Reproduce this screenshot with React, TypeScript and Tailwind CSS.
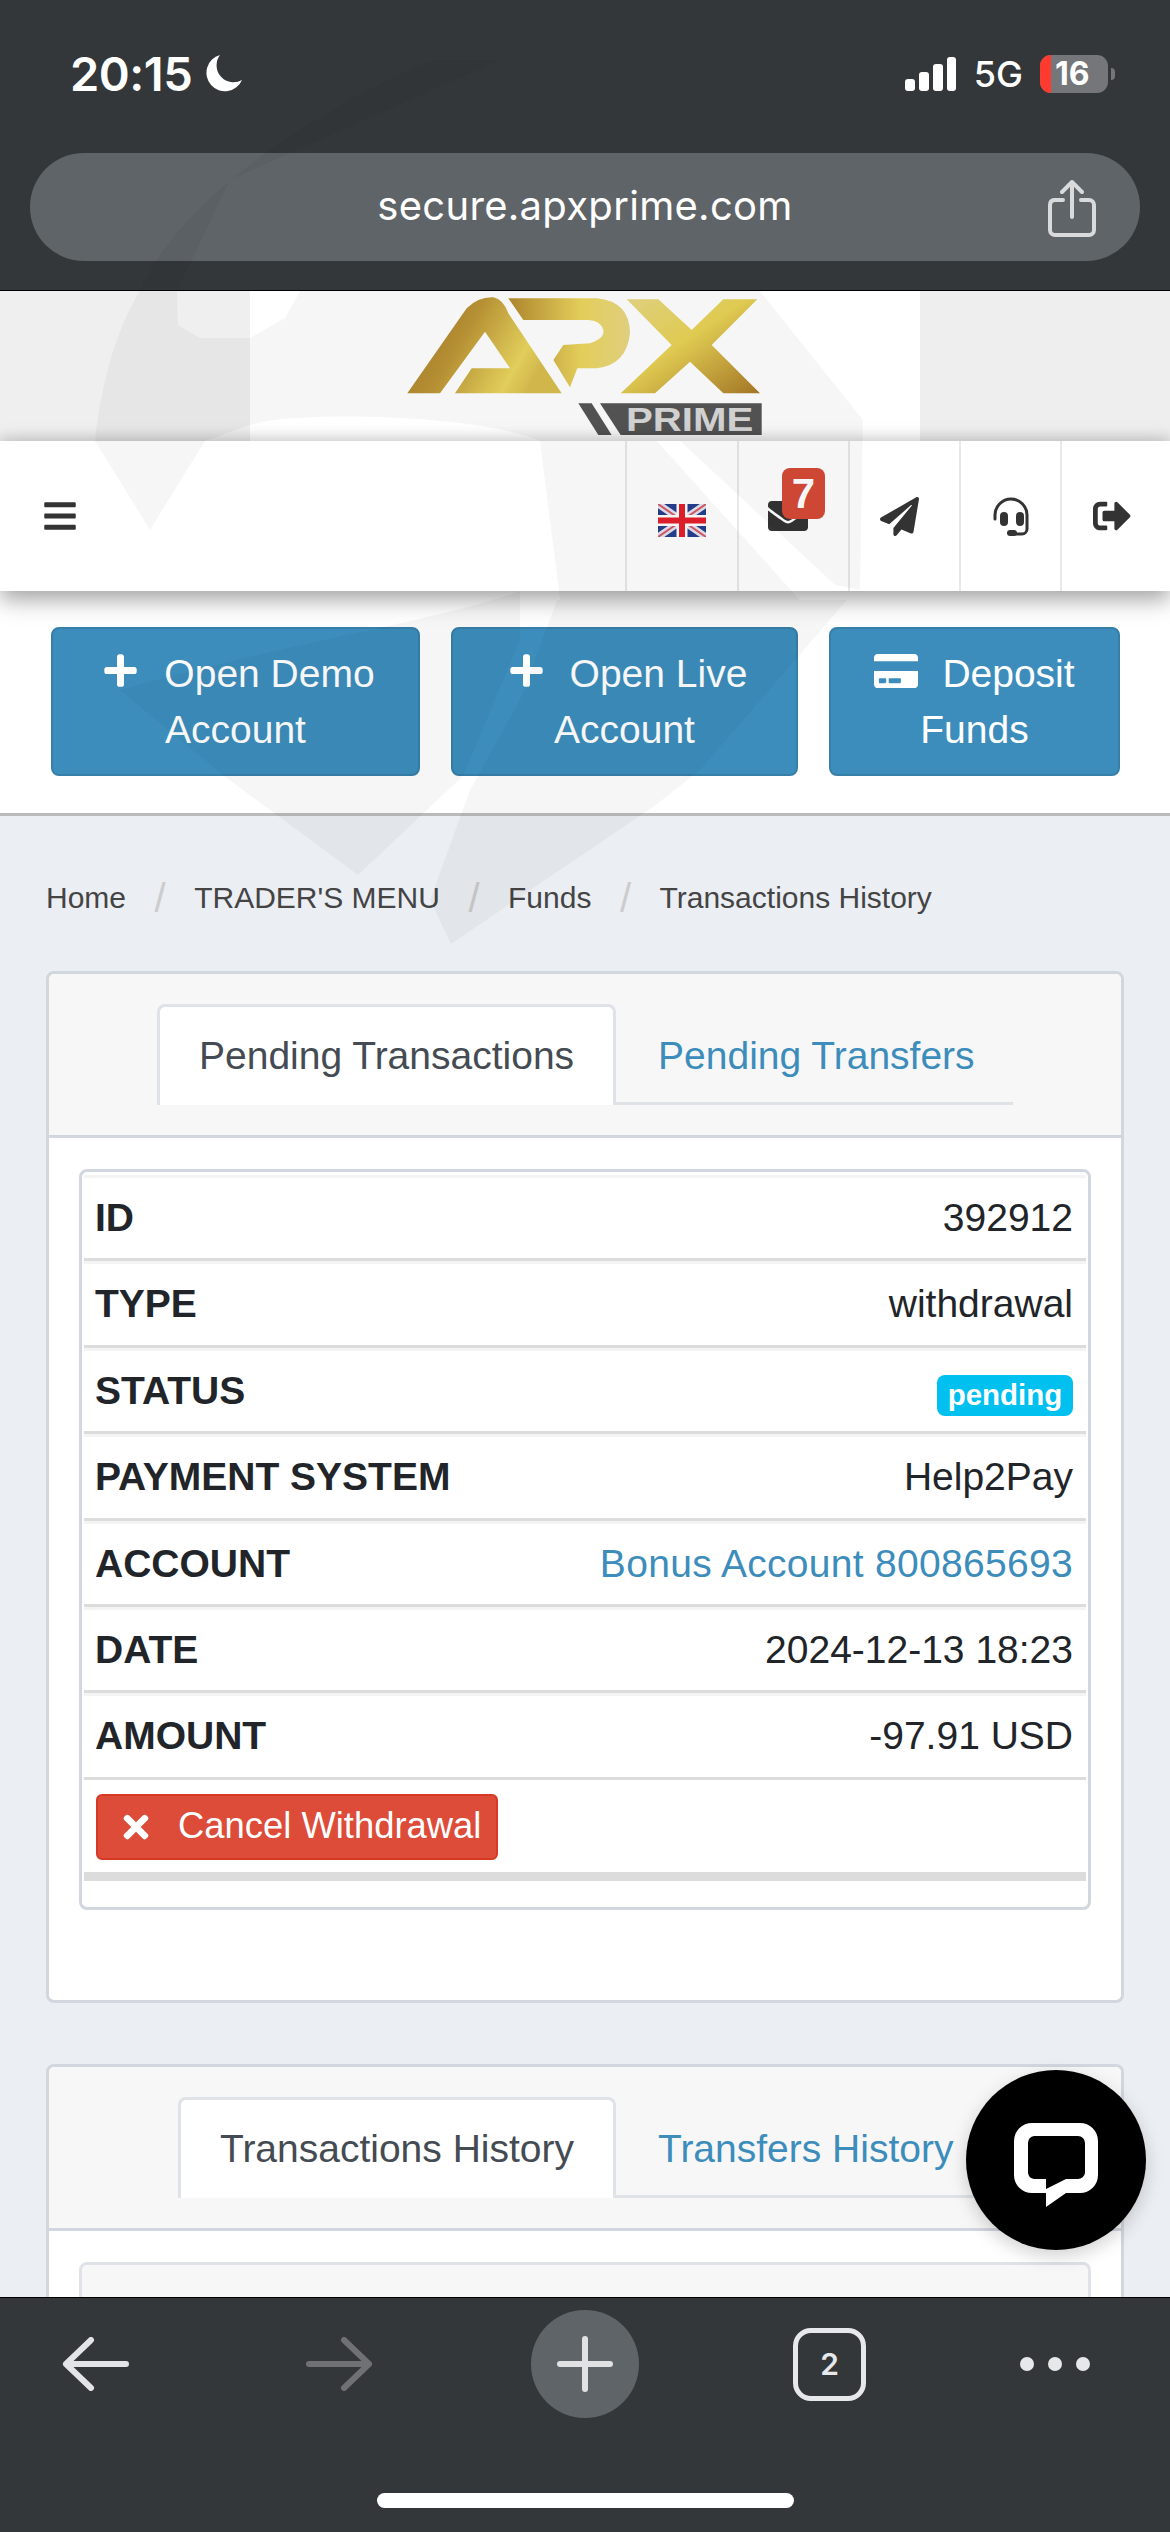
import { FaBars, FaCreditCard, FaEnvelope, FaPaperPlane, FaPlus, FaSignOutAlt, FaTimes } from "react-icons/fa";

const rows = [
  { label: "ID", value: "392912" },
  { label: "TYPE", value: "withdrawal" },
  { label: "STATUS", value: "pending", badge: true },
  { label: "PAYMENT SYSTEM", value: "Help2Pay" },
  { label: "ACCOUNT", value: "Bonus Account 800865693", link: true },
  { label: "DATE", value: "2024-12-13 18:23" },
  { label: "AMOUNT", value: "-97.91 USD" },
];

function StatusBar() {
  return (
    <div className="h-[153px] flex items-center justify-between pb-[6px] pl-[70px] pr-[55px] text-white font-['Inter',sans-serif]">
      <div className="flex items-center gap-[14px]">
        <span className="text-[47px] font-semibold leading-none tracking-[-0.5px]">20:15</span>
        <svg width="36" height="37" viewBox="0 0 36 37" fill="#fff">
          <path d="M14 0 A18.5 18.5 0 1 0 36 25 A17 17 0 0 1 14 0 Z" />
        </svg>
      </div>
      <div className="flex items-center">
        <div className="flex items-end gap-[4px] h-[34px]">
          <span className="w-[10px] h-[12px] rounded-[3px] bg-white" />
          <span className="w-[10px] h-[19px] rounded-[3px] bg-white" />
          <span className="w-[10px] h-[27px] rounded-[3px] bg-white" />
          <span className="w-[9px] h-[34px] rounded-[3px] bg-white" />
        </div>
        <span className="ml-[18px] text-[36px] font-medium leading-none">5G</span>
        <div className="ml-[17px] w-[68px] h-[38px] rounded-[11px] bg-[#747679] overflow-hidden flex">
          <span className="w-[11px] bg-[#ff3b30]" />
          <span className="ml-[4px] text-[32px] font-bold leading-[38px]">16</span>
        </div>
        <span className="ml-[3px] w-[4px] h-[12px] rounded-r-full bg-[#747679]" />
      </div>
    </div>
  );
}

function AddressBar() {
  return (
    <div className="relative mx-[30px] h-[108px] rounded-[54px] bg-[#5f6468] flex items-center justify-center font-['Inter',sans-serif]">
      <span className="text-[40px] text-white tracking-[0.3px] -mt-[2px]">secure.apxprime.com</span>
      <svg className="absolute right-[43px] top-[27px]" width="50" height="58" viewBox="0 0 50 58" fill="none" stroke="#d8dadc" strokeWidth="4" strokeLinecap="round" strokeLinejoin="round">
        <path d="M16 20 H7 A5 5 0 0 0 3 25 V50 A5 5 0 0 0 8 55 H42 A5 5 0 0 0 47 50 V25 A5 5 0 0 0 42 20 H34" />
        <path d="M25 37 V3 M15 12 L25 2 L35 12" />
      </svg>
    </div>
  );
}

function Logo() {
  return (
    <svg className="ml-[100px]" width="450" height="150" viewBox="0 33 1350 450">
      <defs>
        <linearGradient id="goldA" x1="0" y1="0" x2="1" y2="0.35">
          <stop offset="0.1" stopColor="#a97a27" />
          <stop offset="0.45" stopColor="#bd9636" />
          <stop offset="0.85" stopColor="#ead65f" />
          <stop offset="1" stopColor="#d9bd4e" />
        </linearGradient>
        <linearGradient id="goldP" x1="0" y1="0" x2="1" y2="0">
          <stop offset="0" stopColor="#b48a2f" />
          <stop offset="0.6" stopColor="#ecd65e" />
          <stop offset="1" stopColor="#e8d683" />
        </linearGradient>
        <linearGradient id="goldX" x1="0" y1="0" x2="1" y2="1">
          <stop offset="0" stopColor="#e8d886" />
          <stop offset="0.45" stopColor="#e8d255" />
          <stop offset="1" stopColor="#a97a27" />
        </linearGradient>
      </defs>
      <path d="M172 340 L350 85 Q385 50 430 52 Q460 58 475 100 L635 340 L315 340 L365 265 L480 265 L405 155 L270 340 Z" fill="url(#goldA)" />
      <path d="M475 55 L740 55 Q840 65 840 160 Q830 255 740 265 L682 265 L660 322 L610 240 L640 195 L720 190 Q765 175 760 150 Q750 120 715 120 L520 120 Z" fill="url(#goldP)" />
      <path d="M830 58 L925 58 L1025 150 L1120 58 L1222 58 L1085 195 L1230 340 L1120 340 L1020 245 L915 340 L812 340 L965 195 Z" fill="url(#goldX)" />
      <path d="M685 370 L725 370 L785 465 L745 465 Z" fill="#555" />
      <path d="M750 370 L1235 370 L1235 465 L812 465 Z" fill="#555" />
      <text x="828" y="452" fontFamily="'Liberation Sans',sans-serif" fontWeight="700" fontSize="98" fill="#d9d9d9" textLength="382" lengthAdjust="spacingAndGlyphs">PRIME</text>
    </svg>
  );
}

function Flag() {
  return (
    <svg className="mt-[8px] blur-[0.4px]" width="48" height="33" viewBox="0 0 48 33">
      <rect width="48" height="33" fill="#27408f" />
      <path d="M0 0 L48 33 M48 0 L0 33" stroke="#e4e4ee" strokeWidth="7" />
      <path d="M0 0 L48 33 M48 0 L0 33" stroke="#d85a6a" strokeWidth="2" />
      <path d="M24 0 V33 M0 16.5 H48" stroke="#fff" strokeWidth="11" />
      <path d="M24 0 V33 M0 16.5 H48" stroke="#e5202c" strokeWidth="6" />
    </svg>
  );
}

function Headset() {
  return (
    <svg width="38" height="39" viewBox="0 0 36 39" fill="#333">
      <path d="M2 22 V18 A16 16 0 0 1 34 18 V32 A5 5 0 0 1 29 37 H20" fill="none" stroke="#333" strokeWidth="3" strokeLinecap="round" />
      <rect x="7" y="15" width="8" height="14" rx="4" />
      <rect x="23" y="15" width="8" height="14" rx="4" />
      <rect x="14" y="33" width="10" height="6" rx="3" />
    </svg>
  );
}

function NavBar() {
  const cell = "h-full flex justify-center items-center border-l-[2px] border-[#e8e8e8]";
  return (
    <div className="relative z-10 h-[150px] bg-white flex items-center justify-between shadow-[0_8px_22px_rgba(0,0,0,0.38),0_-6px_10px_rgba(0,0,0,0.07)]">
      <FaBars className="ml-[42px] text-[#333]" size={36} />
      <div className="h-full flex">
        <div className={`${cell} w-[112px]`}>
          <Flag />
        </div>
        <div className={`${cell} w-[111px] relative`}>
          <FaEnvelope className="text-[#333] mr-[12px]" size={40} />
          <span className="absolute left-[43px] top-[27px] w-[43px] h-[51px] rounded-[8px] bg-[#d64a36] text-white text-[42px] font-bold leading-[51px] text-center">7</span>
        </div>
        <div className={`${cell} w-[111px]`}>
          <FaPaperPlane className="text-[#333] mr-[10px]" size={39} />
        </div>
        <div className={`${cell} w-[101px]`}>
          <Headset />
        </div>
        <div className={`${cell} w-[110px]`}>
          <FaSignOutAlt className="text-[#333] mr-[8px]" size={38} />
        </div>
      </div>
    </div>
  );
}

function ActionButton({ width, icon, children }: { width: string; icon: React.ReactNode; children: React.ReactNode }) {
  return (
    <div className={`${width} h-[149px] rounded-[8px] bg-[#3c8dbc] border-[2px] border-[#367fa9] px-[20px] pt-[17px] text-center text-white text-[39px] leading-[56px]`}>
      {icon}
      {children}
    </div>
  );
}

function PanelTabs({ active, other, className }: { active: string; other: string; className: string }) {
  return (
    <div className="bg-[#f7f7f7] h-[164px] pt-[30px] border-b-[3px] border-[#d2d6de] rounded-t-[6px]">
      <div className={`${className} flex border-b-[3px] border-[#dfe2e7] h-[101px] text-[39px]`}>
        <div className="h-[101px] px-[39px] pt-[24px] leading-[50px] bg-white border-[3px] border-b-0 border-[#dfe2e7] rounded-t-[8px] text-[#444b52]">{active}</div>
        <div className="pl-[42px] pt-[27px] leading-[50px] text-[#3c8dbc]">{other}</div>
      </div>
    </div>
  );
}

function PendingTable() {
  return (
    <div className="border-[3px] border-[#d2d6de] rounded-[8px] px-[2px] pt-[3px] pb-[26px]">
      {rows.map((r) => (
        <div key={r.label} className="h-[86.4px] border-t-[3px] border-t-[#f4f4f4] border-b-[3px] border-b-[#dcdcdc] pl-[11px] pr-[13px] flex items-center justify-between text-[39px] text-[#212529]">
          <span className="font-bold">{r.label}</span>
          {r.badge ? (
            <span className="mt-[10px] h-[41px] w-[136px] rounded-[8px] bg-[#00c0ef] text-white text-[29.5px] font-bold leading-[40px] text-center">{r.value}</span>
          ) : (
            <span className={r.link ? "text-[#3c8dbc] tracking-[0.3px]" : ""}>{r.value}</span>
          )}
        </div>
      ))}
      <div className="ml-[12px] mt-[14px] w-[402px] h-[66px] rounded-[6px] bg-[#dd4b39] border-[2px] border-[#d73925] flex items-center pl-[20px] text-white text-[36.4px]">
        <FaTimes size={36} />
        <span className="ml-[24px]">Cancel Withdrawal</span>
      </div>
      <div className="mt-[12px] h-[9px] bg-[#dcdcdc]" />
    </div>
  );
}

function Watermark() {
  return (
    <svg className="absolute left-0 top-0 z-20 pointer-events-none" width="1170" height="1000" viewBox="0 0 1170 1000" fill="#000" fillOpacity="0.035">
      <path d="M140 291 C170 220 270 130 433 60 L500 60 L230 180 L177 291 Z" />
      <path d="M95 441 C100 390 115 330 140 291 L177 291 L178 325 L200 338 L250 338 L285 318 L300 291 L760 291 L863 420 L860 590 L835 585 L680 441 L657 441 L800 600 L560 600 L540 441 C480 415 300 410 250 425 L205 441 L150 530 Z" />
      <path d="M520 591 C440 620 300 640 120 690 L224 776 L358 875 L463 776 L520 640 Z" />
      <path d="M557 600 L847 600 L700 770 L656 805 L451 944 L430 900 L470 790 L520 700 Z" />
    </svg>
  );
}

function ChatBubble() {
  return (
    <div className="absolute z-30 left-[966px] top-[2070px] w-[180px] h-[180px] rounded-full bg-black flex items-center justify-center shadow-[0_6px_18px_rgba(0,0,0,0.18)]">
      <svg className="mt-[10px]" width="84" height="84" viewBox="0 0 84 84" fill="#fff">
        <path fillRule="evenodd" d="M18 0 H66 A18 18 0 0 1 84 18 V52 A18 18 0 0 1 66 70 H52 L32 84 V70 H18 A18 18 0 0 1 0 52 V18 A18 18 0 0 1 18 0 Z M20 13 A7 7 0 0 0 14 20 V50 A7 7 0 0 0 20 56 H32 V66 L52 56 H64 A7 7 0 0 0 71 50 V20 A7 7 0 0 0 64 13 Z" />
      </svg>
    </div>
  );
}

function BottomBar() {
  return (
    <div className="relative z-30 h-[235px] bg-[#34373a] border-t border-black font-['Inter',sans-serif]">
      <div className="flex items-center h-[108px] mt-[12px] pl-[62px]">
        <svg width="67" height="54" viewBox="0 0 67 54" fill="none" stroke="#e2e4e6" strokeWidth="6" strokeLinecap="round" strokeLinejoin="round">
          <path d="M64 27 H4 M29 3 L4 27 L29 51" />
        </svg>
        <svg className="ml-[177px]" width="67" height="54" viewBox="0 0 67 54" fill="none" stroke="#6f7174" strokeWidth="6" strokeLinecap="round" strokeLinejoin="round">
          <path d="M3 27 H63 M38 3 L63 27 L38 51" />
        </svg>
        <div className="ml-[158px] w-[108px] h-[108px] rounded-full bg-[#5f6468] flex items-center justify-center">
          <svg width="56" height="56" viewBox="0 0 56 56" fill="none" stroke="#e0e2e4" strokeWidth="6" strokeLinecap="round">
            <path d="M28 3 V53 M3 28 H53" />
          </svg>
        </div>
        <div className="ml-[154px] w-[73px] h-[73px] rounded-[18px] border-[5px] border-[#e6e8ea] flex items-center justify-center text-[#e6e8ea] text-[30px] font-semibold">2</div>
        <div className="ml-[154px] flex gap-[14px]">
          <span className="w-[14px] h-[14px] rounded-full bg-[#e6e8ea]" />
          <span className="w-[14px] h-[14px] rounded-full bg-[#e6e8ea]" />
          <span className="w-[14px] h-[14px] rounded-full bg-[#e6e8ea]" />
        </div>
      </div>
      <div className="mx-auto mt-[75px] w-[417px] h-[15px] rounded-full bg-white" />
    </div>
  );
}

export default function App() {
  return (
    <div className="relative w-[1170px] h-[2532px] overflow-hidden flex flex-col font-['Liberation_Sans',Arial,sans-serif]">
      {/* browser chrome */}
      <div className="h-[291px] shrink-0 bg-[#34373a] border-b border-black">
        <StatusBar />
        <AddressBar />
      </div>

      {/* logo strip */}
      <div className="h-[150px] shrink-0 flex">
        <div className="w-[250px] bg-[#efefef]" />
        <div className="w-[670px] bg-white overflow-hidden">
          <Logo />
        </div>
        <div className="flex-1 bg-[#eeeeee]" />
      </div>

      <NavBar />

      {/* quick actions */}
      <div className="shrink-0 bg-white h-[225px] pt-[36px] pl-[51px] flex gap-[31px] items-start border-b-[3px] border-[#bbbbbb]">
        <ActionButton width="w-[369px]" icon={<FaPlus className="inline-block ml-[6px] mr-[25px] -mt-[12px]" size={37} />}>
          Open Demo Account
        </ActionButton>
        <ActionButton width="w-[347px]" icon={<FaPlus className="inline-block ml-[6px] mr-[25px] -mt-[12px]" size={37} />}>
          Open Live Account
        </ActionButton>
        <ActionButton width="w-[291px]" icon={<FaCreditCard className="inline-block mr-[24px] -mt-[12px]" size={44} />}>
          Deposit Funds
        </ActionButton>
      </div>

      {/* page */}
      <div className="flex-1 min-h-0 overflow-hidden bg-[#ebeef3] px-[46px]">
        <div className="pt-[62px] mb-[53px] flex items-center h-[102px] text-[30px] text-[#444] leading-[40px]">
          <span>Home</span>
          <span className="mx-[28.5px] text-[40px] text-[#cccccc]">/</span>
          <span>TRADER'S MENU</span>
          <span className="mx-[28.5px] text-[40px] text-[#cccccc]">/</span>
          <span>Funds</span>
          <span className="mx-[28.5px] text-[40px] text-[#cccccc]">/</span>
          <span>Transactions History</span>
        </div>

        <div className="border-[3px] border-[#d2d6de] rounded-[8px] bg-white">
          <PanelTabs active="Pending Transactions" other="Pending Transfers" className="ml-[108px] w-[856px]" />
          <div className="pt-[31px] px-[30px] pb-[90px]">
            <PendingTable />
          </div>
        </div>

        <div className="mt-[61px] border-[3px] border-[#d2d6de] rounded-[8px] bg-white">
          <PanelTabs active="Transactions History" other="Transfers History" className="ml-[129px] w-[835px]" />
          <div className="pt-[31px] px-[30px]">
            <div className="h-[200px] border-[3px] border-[#dfe2e7] rounded-[8px] bg-[#f7f7f7]" />
          </div>
        </div>
      </div>

      <BottomBar />
      <Watermark />
      <ChatBubble />
    </div>
  );
}
